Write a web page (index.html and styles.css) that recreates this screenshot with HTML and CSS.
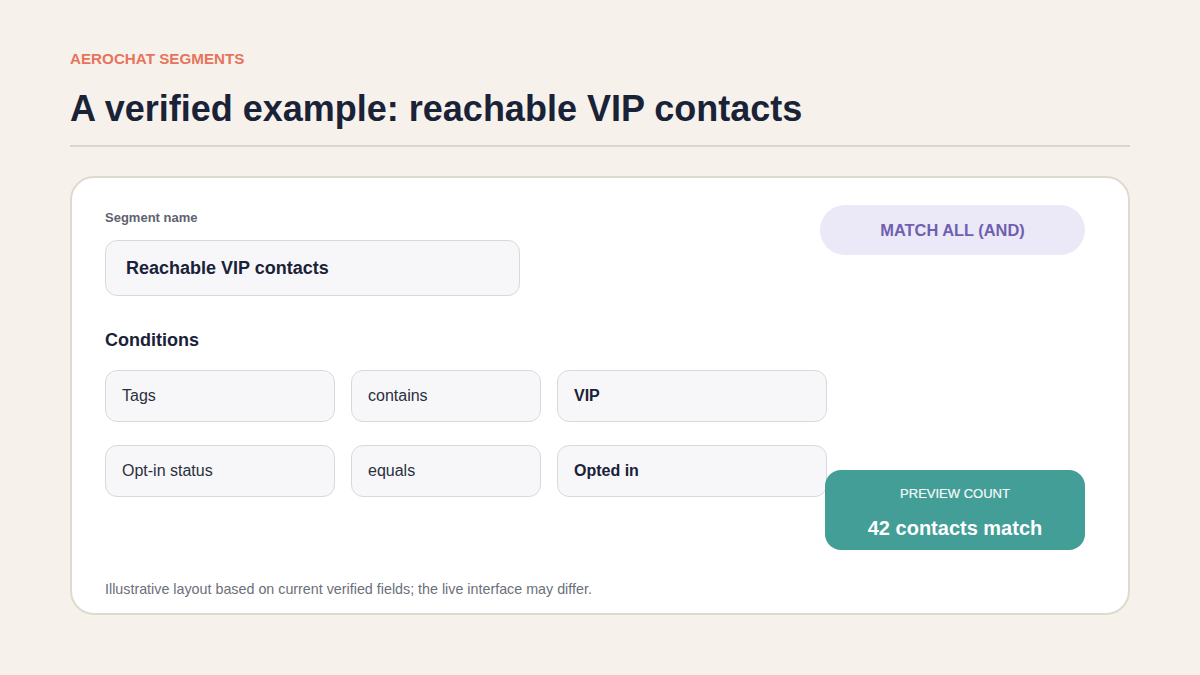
FILE: index.html
```html
<!DOCTYPE html>
<html lang="en">
<head>
<meta charset="UTF-8">
<meta name="viewport" content="width=device-width, initial-scale=1.0">
<title>AeroChat Segments</title>
<link rel="stylesheet" href="styles.css">
</head>
<body>

<div class="page">
    <div class="eyebrow">AEROCHAT SEGMENTS</div>
    <h1 class="title">A verified example: reachable VIP contacts</h1>
    <hr class="rule">

    <div class="card">
        <div class="card-body">
            <div class="form">
                <label class="field-label">Segment name</label>
                <div class="input name-input">Reachable VIP contacts</div>

                <h3 class="section-title">Conditions</h3>
                <div class="conditions">
                    <div class="input">Tags</div>
                    <div class="input">contains</div>
                    <div class="input value">VIP</div>

                    <div class="input">Opt-in status</div>
                    <div class="input">equals</div>
                    <div class="input value">Opted in</div>
                </div>
            </div>

            <div class="aside">
                <div class="match-pill">MATCH ALL (AND)</div>
                <div class="preview">
                    <div class="preview-label">PREVIEW COUNT</div>
                    <div class="preview-count">42 contacts match</div>
                </div>
            </div>
        </div>

        <p class="footnote">Illustrative layout based on current verified fields; the live interface may differ.</p>
    </div>
</div>

</body>
</html>
```

FILE: styles.css
```css
body {
    font-family: "Liberation Sans", Arial, sans-serif;
    margin: 0;
    padding: 0;
    background-color: #f6f2eb;
    color: #1a2238;
}
.page {
    padding: 51px 70px 0 70px;
}
.eyebrow {
    font-size: 15.2px;
    font-weight: bold;
    color: #e8735c;
    line-height: 16px;
}
.title {
    margin: 21px 0 0 0;
    font-size: 36px;
    line-height: 42px;
    font-weight: bold;
    color: #1a2238;
}
.rule {
    margin: 15px 0 0 0;
    border: none;
    border-top: 2px solid #dbd7cf;
}

/* main card */
.card {
    margin-top: 29px;
    background-color: #fff;
    border: 2px solid #dedace;
    border-radius: 24px;
    padding: 27px 43px 15px 33px;
}
.card-body {
    display: grid;
    grid-template-columns: 715px 265px;
}
.field-label {
    display: block;
    margin-top: 5px;
    font-size: 13px;
    line-height: 16px;
    font-weight: bold;
    color: #5f6270;
}
.input {
    box-sizing: border-box;
    display: flex;
    align-items: center;
    height: 52px;
    padding: 0 16px;
    background-color: #f7f7f9;
    border: 1px solid #d9d9dd;
    border-radius: 12px;
    font-size: 16px;
    color: #2a2f3d;
}
.name-input {
    width: 415px;
    height: 56px;
    margin-top: 14px;
    padding: 0 20px;
    font-size: 18px;
    font-weight: bold;
    color: #1a2238;
}
.section-title {
    margin: 33px 0 0 0;
    font-size: 18px;
    line-height: 22px;
    font-weight: bold;
}
.conditions {
    width: 722px;
    margin-top: 19px;
    display: grid;
    grid-template-columns: 230px 190px 270px;
    column-gap: 16px;
    row-gap: 23px;
}
.conditions .value {
    font-weight: bold;
    color: #1a2238;
}

/* right column */
.aside {
    display: flex;
    flex-direction: column;
    align-items: flex-end;
}
.match-pill {
    width: 265px;
    height: 50px;
    display: flex;
    align-items: center;
    justify-content: center;
    background-color: #ebe8f8;
    border-radius: 25px;
    font-size: 16.4px;
    font-weight: bold;
    color: #6f5fb0;
}
.preview {
    width: 260px;
    height: 80px;
    margin-top: 215px;
    box-sizing: border-box;
    padding-top: 16px;
    background-color: #429e96;
    border-radius: 16px;
    text-align: center;
    color: #fff;
}
.preview-label {
    font-size: 13px;
    line-height: 16px;
    color: #f4faf9;
    -webkit-text-stroke: 0.2px #f4faf9;
}
.preview-count {
    margin-top: 14px;
    font-size: 20px;
    line-height: 24px;
    font-weight: bold;
}
.footnote {
    margin: 31px 0 0 0;
    font-size: 14.3px;
    line-height: 17px;
    color: #6b6f7a;
}
```
